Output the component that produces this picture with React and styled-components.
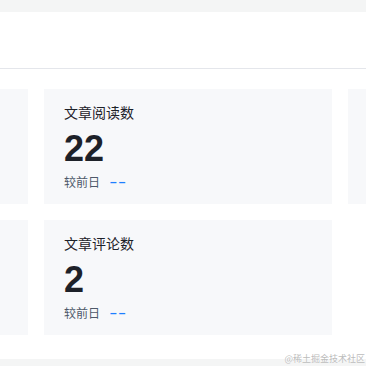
import React from "react";
import styled, { createGlobalStyle } from "styled-components";

const Global = createGlobalStyle`
  html, body { margin: 0; padding: 0; }
  body {
    background: #f4f5f5;
    font-family: "Liberation Sans", "Noto Sans CJK SC", sans-serif;
    overflow: hidden;
  }
`;

const Page = styled.div`
  width: 366px;
  height: 366px;
  padding-top: 12px;
  box-sizing: border-box;
  overflow: hidden;
  position: relative;
`;

const Panel = styled.section`
  background: #ffffff;
  padding-bottom: 24px;
`;

const Header = styled.div`
  height: 56px;
  border-bottom: 1px solid #e4e6eb;
`;

const Grid = styled.div`
  display: grid;
  grid-template-columns: repeat(3, 288px);
  gap: 16px;
  margin-left: -260px;
  padding-top: 20px;
`;

const Card = styled.div`
  background: #f7f8fa;
  height: 115px;
  box-sizing: border-box;
  padding: 12px 20px 0;
  display: flex;
  flex-direction: column;
`;

const Title = styled.div`
  font-family: "Noto Sans CJK SC", sans-serif;
  font-size: 14px;
  line-height: 22px;
  color: #1d2129;
`;

const Value = styled.div`
  font-family: "Liberation Sans", sans-serif;
  font-weight: 700;
  font-size: 36px;
  line-height: 40px;
  margin-top: 6px;
  color: #1d2129;
`;

const Compare = styled.div`
  display: flex;
  align-items: center;
  gap: 10px;
  margin-top: 3px;
  font-family: "Noto Sans CJK SC", sans-serif;
  font-size: 12px;
  line-height: 20px;
  color: #4e5969;
`;

const Dash = styled.span`
  color: #1e80ff;
  font-family: "Liberation Sans", sans-serif;
  font-weight: 700;
  font-size: 12px;
  letter-spacing: 2px;
`;

const Watermark = styled.div`
  position: absolute;
  right: 1px;
  bottom: 2px;
  font-family: "Noto Sans CJK SC", sans-serif;
  font-size: 9px;
  line-height: 10px;
  color: rgba(180, 180, 180, 0.9);
  text-shadow: 0 0 1px #fff;
`;

const cards = [
  { title: "文章展现数", value: "0" },
  { title: "文章阅读数", value: "22" },
  { title: "文章点赞数", value: "0" },
  { title: "文章收藏数", value: "0" },
  { title: "文章评论数", value: "2" },
];

export default function App() {
  return (
    <>
      <Global />
      <Page>
        <Panel>
          <Header />
          <Grid>
            {cards.map((c) => (
              <Card key={c.title}>
                <Title>{c.title}</Title>
                <Value>{c.value}</Value>
                <Compare>
                  较前日<Dash>––</Dash>
                </Compare>
              </Card>
            ))}
          </Grid>
        </Panel>
        <Watermark>@稀土掘金技术社区</Watermark>
      </Page>
    </>
  );
}
